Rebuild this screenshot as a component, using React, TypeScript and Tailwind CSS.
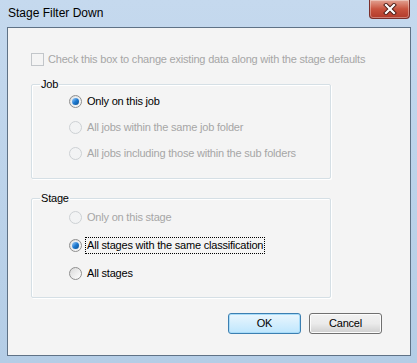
import React from 'react';

const ui = "font-['Liberation_Sans',Arial,sans-serif] text-[11px] leading-[13px] tracking-[-0.2px]";

function Radio({ checked = false, disabled = false }: { checked?: boolean; disabled?: boolean }) {
  if (disabled) {
    return (
      <span className="w-[13px] h-[13px] rounded-full border border-[#cdd1d4] bg-[#f2f3f4] shrink-0" />
    );
  }
  return (
    <span className="w-[13px] h-[13px] rounded-full border border-[#8f8f8f] bg-gradient-to-br from-[#d9d9d9] to-[#ffffff] flex items-center justify-center shrink-0">
      {checked && (
        <span className="w-[7px] h-[7px] rounded-full bg-gradient-to-br from-[#9fd4fb] via-[#1d7ad1] to-[#0c4f8f] ring-1 ring-[#e9eef2]" />
      )}
    </span>
  );
}

function Option({
  label,
  checked,
  disabled,
  focused,
  h,
}: {
  label: string;
  checked?: boolean;
  disabled?: boolean;
  focused?: boolean;
  h: string;
}) {
  return (
    <div className={`flex items-center pl-[37px] ${h}`}>
      <Radio checked={checked} disabled={disabled} />
      <span
        className={`ml-[3px] px-[1px] ${
          focused ? 'border border-dotted border-black py-[1px]' : 'border border-transparent'
        } ${disabled ? 'text-[#a6a6a6]' : 'text-black'}`}
      >
        {label}
      </span>
    </div>
  );
}

function Group({ title, h, pt, children }: { title: string; h: string; pt: string; children: React.ReactNode }) {
  return (
    <div
      className={`relative w-[300px] ${h} ${pt} border border-[#d5dfe5] shadow-[inset_1px_1px_0_#ffffff,1px_1px_0_#ffffff] rounded-[2px]`}
    >
      <span className="absolute left-[8px] top-[-7px] px-[1px] bg-[#f4f4f4] text-black">{title}</span>
      {children}
    </div>
  );
}

export default function App() {
  return (
    <div className={`w-[417px] h-[363px] flex flex-col bg-gradient-to-b from-[#c5d9ee] to-[#b4cde6] ${ui}`}>
      {/* title bar */}
      <div className="h-[27px] flex items-start justify-between shrink-0">
        <span className="pl-[8px] pt-[6px] text-[12px] leading-[15px] tracking-normal text-black">Stage Filter Down</span>
        <div className="mr-[7px] w-[41px] h-[19px] rounded-b-[4px] border border-t-0 border-[#7b2f2b] bg-gradient-to-b from-[#e2a293] via-[#c8533f] to-[#b23a2a] flex items-center justify-center shadow-[inset_0_0_0_1px_rgba(255,255,255,0.35)]">
          <svg width="14" height="12" viewBox="0 0 14 12">
            <path d="M3 2 L11 10 M11 2 L3 10" stroke="#4a1a14" strokeWidth="4" strokeLinecap="square" />
            <path d="M3 2 L11 10 M11 2 L3 10" stroke="#ffffff" strokeWidth="2.2" strokeLinecap="square" />
          </svg>
        </div>
      </div>

      {/* client area */}
      <div className="flex-1 ml-[7px] mr-[6px] mb-[7px] border border-[#5f7286] bg-[#f4f4f4] flex flex-col pl-[23px]">
        <div className="mt-[25px] h-[13px] flex items-center">
          <span className="w-[13px] h-[13px] border border-[#c2c6ca] bg-[#f4f4f4] shrink-0" />
          <span className="ml-[4px] text-[#a6a6a6]">Check this box to change existing data along with the stage defaults</span>
        </div>

        <div className="mt-[18px]">
          <Group title="Job" h="h-[95px]" pt="pt-[3px]">
            <Option h="h-[26px]" label="Only on this job" checked />
            <Option h="h-[26px]" label="All jobs within the same job folder" disabled />
            <Option h="h-[26px]" label="All jobs including those within the sub folders" disabled />
          </Group>
        </div>

        <div className="mt-[19px]">
          <Group title="Stage" h="h-[100px]" pt="pt-[4px]">
            <Option h="h-[28px]" label="Only on this stage" disabled />
            <Option h="h-[28px]" label="All stages with the same classification" checked focused />
            <Option h="h-[28px]" label="All stages" />
          </Group>
        </div>

        <div className="mt-[15px] flex justify-end gap-[8px] pr-[28px]">
          <button className="w-[73px] h-[21px] rounded-[3px] border border-[#3c7fb1] bg-gradient-to-b from-[#eaf6fd] to-[#bee6fd] shadow-[inset_0_0_0_1px_#a8dcf9] text-black">
            OK
          </button>
          <button className="w-[73px] h-[21px] rounded-[3px] border border-[#707070] bg-gradient-to-b from-[#f2f2f2] via-[#ebebeb] to-[#cfcfcf] shadow-[inset_0_0_0_1px_#fcfcfc] text-black">
            Cancel
          </button>
        </div>
      </div>
    </div>
  );
}
